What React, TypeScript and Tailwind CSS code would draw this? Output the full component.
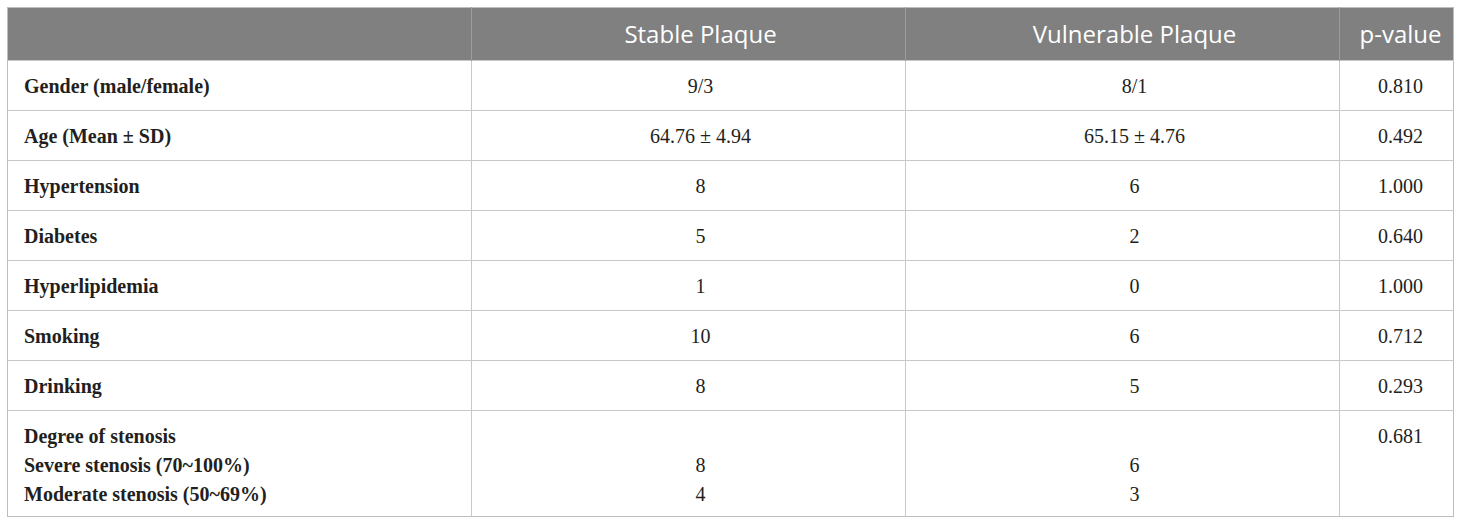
const rows: { label: string; stable: string; vulnerable: string; p: string }[] = [
  { label: "Gender (male/female)", stable: "9/3", vulnerable: "8/1", p: "0.810" },
  { label: "Age (Mean ± SD)", stable: "64.76 ± 4.94", vulnerable: "65.15 ± 4.76", p: "0.492" },
  { label: "Hypertension", stable: "8", vulnerable: "6", p: "1.000" },
  { label: "Diabetes", stable: "5", vulnerable: "2", p: "0.640" },
  { label: "Hyperlipidemia", stable: "1", vulnerable: "0", p: "1.000" },
  { label: "Smoking", stable: "10", vulnerable: "6", p: "0.712" },
  { label: "Drinking", stable: "8", vulnerable: "5", p: "0.293" },
];

const serif = "font-['Liberation_Serif',serif]";

export default function App() {
  return (
    <div className="w-[1460px] h-[524px] bg-white pl-[7px] pt-[7px]">
      <table className="w-[1446px] table-fixed border-collapse border border-[#bdbdbd] text-[#231f20]">
        <colgroup>
          <col className="w-[464px]" />
          <col className="w-[434px]" />
          <col className="w-[434px]" />
          <col className="w-[114px]" />
        </colgroup>
        <thead>
          <tr className="h-[53px] bg-[#808080] text-white font-['Open_Sans',sans-serif] text-[24px] font-normal">
            <th className="border-r border-[#9c9c9c]"></th>
            <th className="border-r border-[#9c9c9c] pl-6 text-center font-normal">Stable Plaque</th>
            <th className="border-r border-[#9c9c9c] pl-6 text-center font-normal">Vulnerable Plaque</th>
            <th className="pl-2 text-center font-normal">p-value</th>
          </tr>
        </thead>
        <tbody className={`${serif} text-[20px]`}>
          {rows.map((r) => (
            <tr key={r.label} className="h-[50px] border-t border-[#c8c8c8]">
              <td className="border-r border-[#c8c8c8] pl-4 font-bold">{r.label}</td>
              <td className="border-r border-[#c8c8c8] pl-6 text-center">{r.stable}</td>
              <td className="border-r border-[#c8c8c8] pl-6 text-center">{r.vulnerable}</td>
              <td className="pl-2 text-center">{r.p}</td>
            </tr>
          ))}
          <tr className="h-[106px] border-t border-[#c8c8c8] align-top">
            <td className="border-r border-[#c8c8c8] pl-4 pt-[11px] font-bold leading-[29px]">
              <div>Degree of stenosis</div>
              <div>Severe stenosis (70~100%)</div>
              <div>Moderate stenosis (50~69%)</div>
            </td>
            <td className="border-r border-[#c8c8c8] pl-6 pt-[11px] text-center leading-[29px]">
              <div>&nbsp;</div>
              <div>8</div>
              <div>4</div>
            </td>
            <td className="border-r border-[#c8c8c8] pl-6 pt-[11px] text-center leading-[29px]">
              <div>&nbsp;</div>
              <div>6</div>
              <div>3</div>
            </td>
            <td className="pl-2 pt-[11px] text-center leading-[29px]">0.681</td>
          </tr>
        </tbody>
      </table>
    </div>
  );
}
